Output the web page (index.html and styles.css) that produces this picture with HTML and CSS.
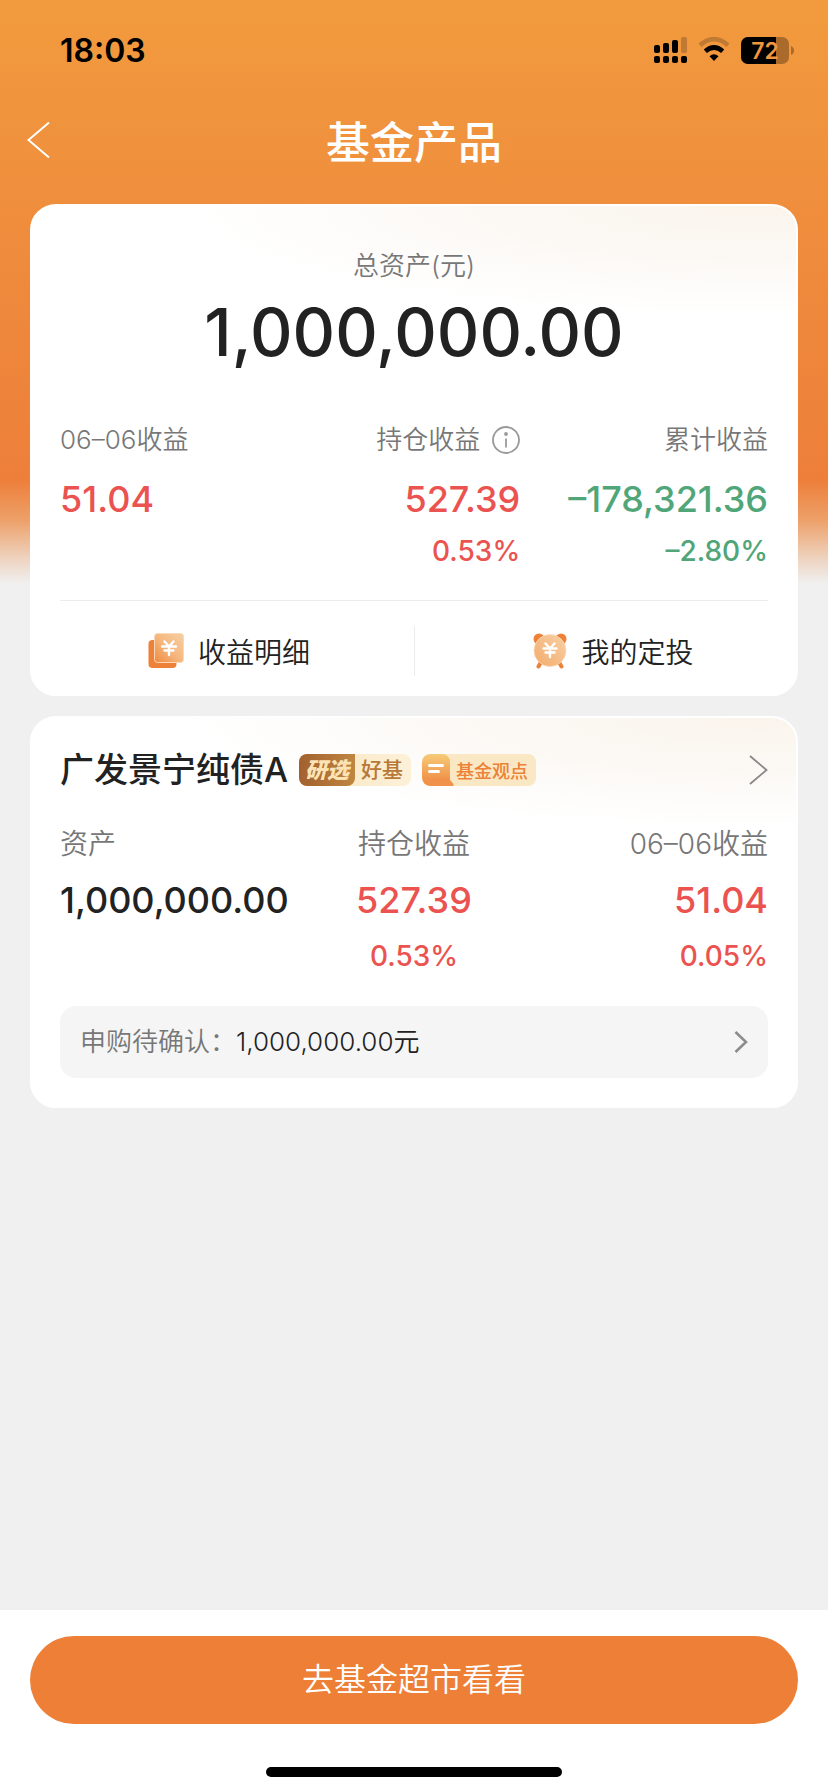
FILE: index.html
```html
<!DOCTYPE html>
<html lang="zh-CN">
<head>
<meta charset="utf-8">
<meta name="viewport" content="width=device-width, initial-scale=1">
<title>基金产品</title>
<link rel="stylesheet" href="styles.css">
</head>
<body>
<div class="page">
  <div class="status">
    <span class="status-time">18:03</span>
    <div class="status-icons">
      <svg class="signal" width="33" height="26" viewBox="0 0 33 26">
        <g fill="#000">
          <rect x="0" y="8" width="6" height="8" rx="2"/><rect x="9" y="6" width="6" height="10" rx="2"/><rect x="18" y="3" width="6" height="13" rx="2"/>
          <rect x="0" y="19" width="6" height="7" rx="2"/><rect x="9" y="19" width="6" height="7" rx="2"/><rect x="18" y="19" width="6" height="7" rx="2"/><rect x="27" y="19" width="6" height="7" rx="2"/>
        </g>
        <rect x="27" y="0" width="6" height="16" rx="2" fill="#c07a33"/>
      </svg>
      <svg class="wifi" width="32" height="26" viewBox="0 0 32 26">
        <path d="M2 8.2Q16-3.8 30 8.2" fill="none" stroke="#c07a33" stroke-width="4.6"/>
        <path d="M7.300 14.300Q16 6.700 24.700 14.300" fill="none" stroke="#000" stroke-width="4.600"/>
        <path d="M11.500 19.200Q16 15.400 20.500 19.200L16 24z" fill="#000"/>
      </svg>
      <svg class="battery" width="53" height="27" viewBox="0 0 53 27">
        <clipPath id="level"><rect width="35" height="27"/></clipPath>
        <rect width="48" height="27" rx="7" fill="#a96a2c"/>
        <rect width="48" height="27" rx="7" fill="#000" clip-path="url(#level)"/>
        <path d="M50 9c4 1 4 8 0 9z" fill="#a96a2c"/>
        <text class="battery-text" x="24" y="22" text-anchor="middle">72</text>
      </svg>
    </div>
  </div>

  <header class="nav">
    <button class="back" type="button" aria-label="返回">
      <svg width="24" height="38" viewBox="0 0 24 38"><path d="M22 1.500 1.500 19 22 36.500" fill="none" stroke="#fff" stroke-width="2"/></svg>
    </button>
    <h1 class="nav-title">基金产品</h1>
  </header>

  <main class="content">
    <section class="card">
      <p class="total-label">总资产(元)</p>
      <p class="total-value">1,000,000.00</p>
      <div class="summary">
        <div class="stat">
          <span class="label">06–06收益</span>
          <span class="value up">51.04</span>
        </div>
        <div class="stat stat-end">
          <span class="label label-info">持仓收益
            <svg width="28" height="28" viewBox="0 0 28 28"><circle cx="14" cy="14" r="13" fill="none" stroke="#999" stroke-width="1.800"/><circle cx="14" cy="8" r="1.900" fill="#999"/><path d="M14 12.500v9" stroke="#999" stroke-width="1.800"/></svg>
          </span>
          <span class="value up">527.39</span>
          <span class="rate up">0.53%</span>
        </div>
        <div class="stat stat-end">
          <span class="label">累计收益</span>
          <span class="value down">–178,321.36</span>
          <span class="rate down">–2.80%</span>
        </div>
      </div>
      <div class="actions">
        <button class="action" type="button">
          <svg width="36" height="36" viewBox="0 0 36 36">
            <defs><linearGradient id="sheet" x1="1" y1="0" x2="0" y2="1"><stop offset="0" stop-color="#f7cfa4"/><stop offset=".5" stop-color="#f5b880"/><stop offset="1" stop-color="#f08a3f"/></linearGradient></defs>
            <rect x="0.500" y="7" width="28" height="28" rx="4" fill="#ee8037"/>
            <rect x="6.500" y="0.500" width="29" height="29" rx="3" fill="url(#sheet)" stroke="#f9d9b8"/>
            <path d="M16.500 8.500l4.500 5 4.500-5M14 13.500h14M16.500 17.500h9M21 13.500v8.500" fill="none" stroke="#fff" stroke-width="2.400" stroke-linecap="round"/>
          </svg>
          收益明细
        </button>
        <button class="action" type="button">
          <svg width="34" height="36" viewBox="0 0 34 36">
            <defs><linearGradient id="clock" x1="1" y1="0" x2="0" y2="1"><stop offset="0" stop-color="#f8d0a4"/><stop offset="1" stop-color="#f3ab6c"/></linearGradient></defs>
            <g fill="#ee8037"><circle cx="6" cy="6" r="5.500"/><circle cx="28" cy="6" r="5.500"/></g>
            <path d="M7.500 30l-2 3.500M26.500 30l2 3.500" stroke="#ee8037" stroke-width="4" stroke-linecap="round"/>
            <circle cx="17" cy="17.500" r="16" fill="url(#clock)" stroke="#f9d9b8" stroke-width=".8"/>
            <path d="M12.500 10.500l4.500 5 4.500-5M10.500 15.500h13M12.500 19.500h9M17 15.500v8.500" fill="none" stroke="#fff" stroke-width="2.400" stroke-linecap="round"/>
          </svg>
          我的定投
        </button>
      </div>
    </section>

    <section class="card card-fund">
      <div class="fund-head">
        <h2 class="fund-name">广发景宁纯债A</h2>
        <span class="badge badge-pick"><em class="pick-mark">研选</em><span class="pick-text">好基</span></span>
        <span class="badge badge-view">
          <svg width="32" height="32" viewBox="0 0 32 32">
            <defs><linearGradient id="bubble" x1="0" y1="0" x2="0" y2="1"><stop offset="0" stop-color="#f6cb78"/><stop offset=".8" stop-color="#f0924a"/></linearGradient></defs>
            <path d="M8 0h12a8 8 0 0 1 8 8v18l3.500 4v2H8a8 8 0 0 1-8-8V8a8 8 0 0 1 8-8z" fill="url(#bubble)"/>
            <path d="M7.500 11.500h13M7.500 17.500h9" stroke="#fff" stroke-width="3" stroke-linecap="round"/>
          </svg>
          基金观点
        </span>
        <a class="fund-more" href="#" aria-label="查看基金">
          <svg width="19" height="30" viewBox="0 0 19 30"><path d="M1 1l16.500 14L1 29" fill="none" stroke="#888" stroke-width="1.800"/></svg>
        </a>
      </div>
      <div class="holding">
        <div class="stat">
          <span class="label">资产</span>
          <span class="value">1,000,000.00</span>
        </div>
        <div class="stat stat-mid">
          <span class="label">持仓收益</span>
          <span class="value up">527.39</span>
          <span class="rate up">0.53%</span>
        </div>
        <div class="stat stat-end">
          <span class="label">06–06收益</span>
          <span class="value up">51.04</span>
          <span class="rate up">0.05%</span>
        </div>
      </div>
      <a class="pending" href="#">
        <span class="pending-label">申购待确认：</span>
        <span class="pending-value">1,000,000.00元</span>
        <svg class="pending-arrow" width="14" height="22" viewBox="0 0 14 22"><path d="M1.500 1l10.500 10L1.500 21" fill="none" stroke="#8c8c8c" stroke-width="2.600"/></svg>
      </a>
    </section>
  </main>

  <footer class="footer">
    <button class="cta" type="button">去基金超市看看</button>
    <div class="home-bar"></div>
  </footer>
</div>
</body>
</html>
```
FILE: styles.css
```css
* {
  box-sizing: border-box;
}

body,
h1,
h2,
p {
  margin: 0;
}

body {
  background: #f0f0f0;
  color: #222;
  font-family: Inter, "Noto Sans CJK SC", sans-serif;
}

button {
  border: 0;
  padding: 0;
  background: none;
  color: inherit;
  font-family: inherit;
}

a {
  color: inherit;
  text-decoration: none;
}

svg {
  display: block;
  flex: none;
}

.page {
  display: flex;
  flex-direction: column;
  min-height: 100vh;
  background: linear-gradient(#f29b3e 0, #ef8d3d 220px, #ed7f3a 480px, #eda069 520px, #eed5c2 560px, #f0f0f0 584px);
}

.status {
  display: flex;
  align-items: center;
  justify-content: space-between;
  height: 100px;
  padding: 0 34px 0 60px;
  color: #000;
}

.status-time {
  font-size: 32px;
  font-weight: 600;
}

.status-icons {
  display: flex;
  align-items: center;
  gap: 11px;
}

.battery-text {
  fill: #f0963f;
  font-size: 23px;
  font-weight: 600;
}

.nav {
  display: flex;
  align-items: center;
  height: 80px;
  padding: 0 27px;
}

.back {
  width: 24px;
}

.nav-title {
  flex: 1;
  padding-right: 24px;
  color: #fff;
  font-family: "Noto Sans CJK SC", sans-serif;
  font-size: 44px;
  font-weight: 500;
  line-height: 56px;
  text-align: center;
}

.content {
  display: flex;
  flex-direction: column;
  gap: 20px;
  padding: 24px 30px;
}

.card {
  padding: 40px 28px 0;
  border: 2px solid #fff;
  border-radius: 26px;
  background: radial-gradient(ellipse 75% 110px at 95% 0, #faf4ec 0, #fcf9f5 50%, #fff 100%) #fff;
}

.total-label {
  color: #777;
  font-size: 26px;
  font-weight: 350;
  line-height: 40px;
  text-align: center;
}

.total-value {
  margin-top: 6px;
  font-size: 66px;
  font-weight: 500;
  line-height: 80px;
  text-align: center;
}

.summary {
  display: grid;
  grid-template-columns: 13fr 13fr 14fr;
  padding: 48px 0 29px;
  border-bottom: 1px solid #ececec;
}

.stat {
  display: flex;
  flex-direction: column;
  align-items: flex-start;
}

.stat-mid {
  align-items: center;
}

.stat-end {
  align-items: flex-end;
}

.label {
  color: #777;
  font-size: 26px;
  font-weight: 350;
  line-height: 40px;
}

.label-info {
  display: flex;
  align-items: center;
  gap: 12px;
}

.value {
  margin-top: 15px;
  font-size: 36px;
  font-weight: 500;
  line-height: 48px;
}

.rate {
  margin-top: 8px;
  font-size: 28px;
  font-weight: 500;
  line-height: 40px;
}

.up {
  color: #eb5350;
}

.down {
  color: #50a678;
}

.actions {
  display: grid;
  grid-template-columns: 1fr 1fr;
  padding: 25px 0 18px;
}

.action {
  display: flex;
  align-items: center;
  justify-content: center;
  gap: 14px;
  height: 50px;
  padding-right: 16px;
  font-size: 28px;
  font-weight: 350;
}

.action + .action {
  border-left: 1px solid #ececec;
  padding: 0 0 0 44px;
}

.card-fund {
  padding: 28px 28px 28px;
}

.fund-head {
  display: flex;
  align-items: center;
  gap: 11px;
}

.fund-name {
  font-size: 34px;
  font-weight: 500;
  line-height: 48px;
}

.badge {
  display: flex;
  align-items: center;
  height: 32px;
  border-radius: 8px;
  overflow: hidden;
}

.badge-pick {
  background: linear-gradient(90deg, #f9e4bf, #fcf1d8);
  line-height: 32px;
}

.pick-mark {
  width: 56px;
  border-radius: 0 0 8px 0;
  background: linear-gradient(90deg, #a2602e, #bf8641);
  color: #fbe3b4;
  font-size: 22px;
  font-weight: 900;
  text-align: center;
}

.pick-text {
  width: 56px;
  padding-left: 6px;
  color: #b87838;
  font-size: 21px;
  font-weight: 500;
}

.badge-view {
  gap: 2px;
  padding-right: 8px;
  background: #fae8c5;
  color: #ed8136;
  font-size: 18px;
  font-weight: 500;
}

.fund-more {
  margin-left: auto;
}

.holding {
  display: grid;
  grid-template-columns: 1fr 1fr 1fr;
  margin-top: 30px;
}

.card-fund .label {
  font-size: 28px;
}

.card-fund .value,
.card-fund .rate {
  margin-top: 12px;
}

.pending {
  display: flex;
  align-items: center;
  height: 72px;
  margin-top: 30px;
  padding: 0 20px;
  border-radius: 16px;
  background: #f5f5f5;
  font-size: 26px;
  font-weight: 350;
  line-height: 40px;
}

.pending-label {
  color: #777;
}

.pending-arrow {
  margin-left: auto;
}

.footer {
  margin-top: auto;
  padding: 26px 30px 15px;
  background: #fff;
}

.cta {
  display: block;
  width: 100%;
  height: 88px;
  border-radius: 44px;
  background: #ed7f36;
  color: #fff;
  font-size: 32px;
  font-weight: 350;
  line-height: 48px;
}

.home-bar {
  width: 296px;
  height: 10px;
  margin: 43px auto 0;
  border-radius: 5px;
  background: #000;
}
```
